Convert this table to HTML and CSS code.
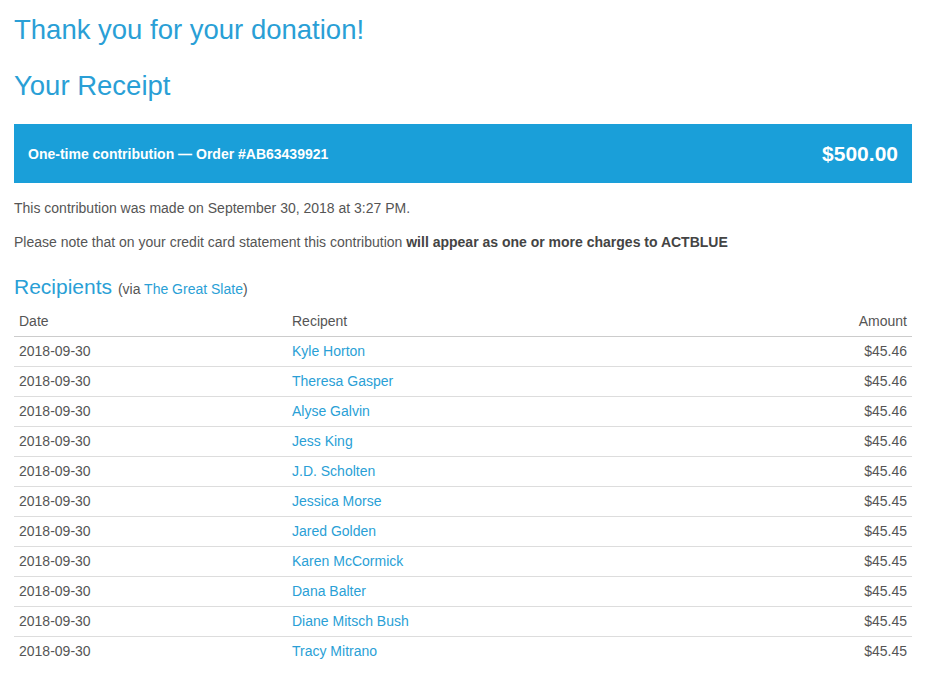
FILE: index.html
```html
<!DOCTYPE html>
<html lang="en">
<head>
    <meta charset="UTF-8">
    <meta name="viewport" content="width=device-width, initial-scale=1.0">
    <title>Receipt</title>
    <link rel="stylesheet" href="styles.css">
</head>
<body>
    <div class="container">
        <h1 class="title">Thank you for your donation!</h1>
        <h1 class="title receipt-title">Your Receipt</h1>

        <div class="order-bar">
            <span class="order-label">One-time contribution &mdash; Order #AB63439921</span>
            <span class="order-total">$500.00</span>
        </div>

        <p class="note">This contribution was made on September 30, 2018 at 3:27 PM.</p>
        <p class="note">Please note that on your credit card statement this contribution <strong>will appear as one or more charges to ACTBLUE</strong></p>

        <h2 class="recipients-title">Recipients <small>(via <a href="#">The Great Slate</a>)</small></h2>

        <table class="recipients">
            <thead>
                <tr>
                    <th class="col-date">Date</th>
                    <th>Recipent</th>
                    <th class="amount">Amount</th>
                </tr>
            </thead>
            <tbody>
                <tr><td>2018-09-30</td><td><a href="#">Kyle Horton</a></td><td class="amount">$45.46</td></tr>
                <tr><td>2018-09-30</td><td><a href="#">Theresa Gasper</a></td><td class="amount">$45.46</td></tr>
                <tr><td>2018-09-30</td><td><a href="#">Alyse Galvin</a></td><td class="amount">$45.46</td></tr>
                <tr><td>2018-09-30</td><td><a href="#">Jess King</a></td><td class="amount">$45.46</td></tr>
                <tr><td>2018-09-30</td><td><a href="#">J.D. Scholten</a></td><td class="amount">$45.46</td></tr>
                <tr><td>2018-09-30</td><td><a href="#">Jessica Morse</a></td><td class="amount">$45.45</td></tr>
                <tr><td>2018-09-30</td><td><a href="#">Jared Golden</a></td><td class="amount">$45.45</td></tr>
                <tr><td>2018-09-30</td><td><a href="#">Karen McCormick</a></td><td class="amount">$45.45</td></tr>
                <tr><td>2018-09-30</td><td><a href="#">Dana Balter</a></td><td class="amount">$45.45</td></tr>
                <tr><td>2018-09-30</td><td><a href="#">Diane Mitsch Bush</a></td><td class="amount">$45.45</td></tr>
                <tr><td>2018-09-30</td><td><a href="#">Tracy Mitrano</a></td><td class="amount">$45.45</td></tr>
            </tbody>
        </table>
    </div>
</body>
</html>
```

FILE: styles.css
```css
body {
    font-family: "Liberation Sans", Arial, sans-serif;
    font-size: 14px;
    color: #555;
    background-color: #fff;
    margin: 0;
    padding: 0;
}

a {
    color: #2a9fd6;
    text-decoration: none;
}

.container {
    padding: 0 16px 0 14px;
}

.title {
    color: #2a9fd6;
    font-size: 27.5px;
    font-weight: normal;
    line-height: 32px;
    margin: 14px 0 0 0;
}

.receipt-title {
    margin-top: 24px;
}

/* barra azul con el total */
.order-bar {
    display: flex;
    justify-content: space-between;
    align-items: center;
    background-color: #1a9fd9;
    color: #fff;
    height: 59px;
    padding: 0 14px;
    margin-top: 22px;
}

.order-label {
    font-weight: bold;
    font-size: 14px;
}

.order-total {
    font-weight: bold;
    font-size: 21px;
}

.note {
    margin: 16px 0 0 0;
    line-height: 18px;
}

.note + .note {
    margin-top: 16px;
}

.note strong {
    color: #444;
}

.recipients-title {
    color: #2a9fd6;
    font-size: 21px;
    font-weight: normal;
    line-height: 24px;
    margin: 24px 0 6px 0;
}

.recipients-title small {
    font-size: 14px;
    color: #555;
}

.recipients {
    width: 100%;
    border-collapse: collapse;
}

.recipients th,
.recipients td {
    text-align: left;
    padding: 6px 5px;
    line-height: 17px;
    font-weight: normal;
}

.recipients th {
    border-bottom: 1px solid #ccc;
}

.recipients td {
    border-top: 1px solid #ddd;
}

.recipients tbody tr:first-child td {
    border-top: none;
}

.recipients .col-date {
    width: 263px;
}

.recipients .amount {
    text-align: right;
}
```
